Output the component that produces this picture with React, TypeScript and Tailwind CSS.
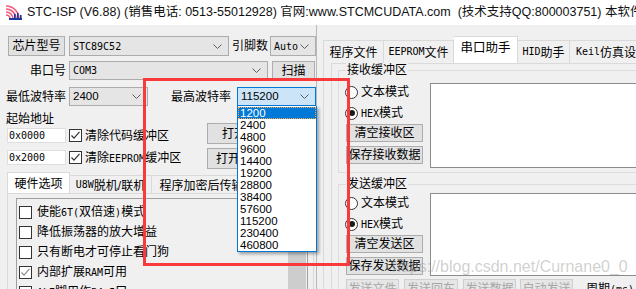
import React from "react";

const SANS = "font-['Liberation_Sans','Noto_Sans_CJK_SC',sans-serif]";

function M({ children }: { children: React.ReactNode }) {
  return <span className="font-['DejaVu_Sans_Mono','Liberation_Mono','Noto_Sans_CJK_SC',monospace] text-[10px]">{children}</span>;
}

function Chevron() {
  return (
    <svg width="9" height="5" viewBox="0 0 9 5" className="shrink-0">
      <polyline points="0.5,0.5 4.5,4.5 8.5,0.5" fill="none" stroke="#5f5f5f" strokeWidth="1" />
    </svg>
  );
}

function Combo({ className = "", active = false, children }: { className?: string; active?: boolean; children: React.ReactNode }) {
  return (
    <div
      className={`flex items-center justify-between border pl-[3px] pr-[6px] whitespace-nowrap ${
        active ? "border-[#0078d7] bg-[#cce4f7]" : "border-[#acacac] bg-[#e5e5e5]"
      } ${className}`}
    >
      <span className="flex items-center">{children}</span>
      <Chevron />
    </div>
  );
}

function Btn({ className = "", disabled = false, children }: { className?: string; disabled?: boolean; children: React.ReactNode }) {
  return (
    <div
      className={`flex items-center justify-center border whitespace-nowrap shrink-0 ${
        disabled ? "border-[#cfcfcf] bg-[#e6e6e6] text-[#a6a6a6]" : "border-[#adadad] bg-[#e1e1e1]"
      } ${className}`}
    >
      {children}
    </div>
  );
}

function Check({ checked = false, gray = false, className = "" }: { checked?: boolean; gray?: boolean; className?: string }) {
  return (
    <div className={`w-[13px] h-[13px] border border-[#333333] bg-white flex items-center justify-center shrink-0 ${className}`}>
      {checked && (
        <svg width="11" height="11" viewBox="0 0 11 11">
          <polyline points="1.5,5.5 4,8.2 9.5,1.8" fill="none" stroke={gray ? "#8a8a8a" : "#333333"} strokeWidth="1.2" />
        </svg>
      )}
    </div>
  );
}

function Radio({ checked = false }: { checked?: boolean }) {
  return (
    <div className="w-[13px] h-[13px] rounded-full border border-[#333333] bg-white flex items-center justify-center shrink-0">
      {checked && <div className="w-[6px] h-[6px] rounded-full bg-[#1a1a1a]" />}
    </div>
  );
}

function Logo() {
  return (
    <svg width="18" height="15" viewBox="0 0 18 15" className="shrink-0">
      <path d="M1 4 A10 10 0 0 1 11 14" fill="none" stroke="#ef5a7a" strokeWidth="1.6" />
      <path d="M1 1 A13 13 0 0 1 14 14" fill="none" stroke="#ef5a7a" strokeWidth="1.6" />
      <path d="M1 7 A7 7 0 0 1 8 14" fill="none" stroke="#ef5a7a" strokeWidth="1.6" />
      <path d="M1 10 A4 4 0 0 1 5 14" fill="none" stroke="#ef5a7a" strokeWidth="1.6" />
      <rect x="4" y="13" width="13" height="2" fill="#1c3a9e" />
      <rect x="9" y="9" width="1.6" height="5" fill="#1c3a9e" />
      <rect x="12" y="8" width="1.6" height="6" fill="#1c3a9e" />
      <rect x="15" y="10" width="1.6" height="4" fill="#1c3a9e" />
    </svg>
  );
}

function GroupBox({ title, className = "", children }: { title: string; className?: string; children: React.ReactNode }) {
  return (
    <div className={`relative border border-[#dcdcdc] ${className}`}>
      <span className="absolute -top-[8px] left-[7px] bg-[#f0f0f0] px-[1px] leading-[14px]">{title}</span>
      {children}
    </div>
  );
}

const BAUDS = ["1200", "2400", "4800", "9600", "14400", "19200", "28800", "38400", "57600", "115200", "230400", "460800"];

export default function App() {
  return (
    <div className={`relative w-[636px] h-[289px] overflow-hidden bg-[#f0f0f0] text-[12px] text-black ${SANS}`}>
      {/* Title bar */}
      <div className="h-[25px] bg-white flex items-center pl-[5px] whitespace-nowrap overflow-hidden">
        <Logo />
        <span className="ml-[4px] text-[12.5px] text-[#111]">
          STC-ISP (V6.88) (销售电话: 0513-55012928) 官网:www.STCMCUDATA.com&nbsp;&nbsp;(技术支持QQ:800003751) 本软件为宏晶科技官方软件
        </span>
      </div>

      <div className="flex">
        {/* Left panel */}
        <div className="w-[316px] shrink-0 flex flex-col">
          <div className="flex items-center h-[20px] mt-[11px] pl-[8px]">
            <Btn className="w-[57px] h-[20px]">芯片型号</Btn>
            <Combo className="ml-[4px] w-[160px] h-[20px]">
              <M>STC89C52</M>
            </Combo>
            <span className="ml-[3px] w-[36px] whitespace-nowrap">引脚数</span>
            <Combo className="ml-[2px] w-[46px] h-[20px]">
              <M>Auto</M>
            </Combo>
          </div>

          <div className="flex items-center h-[19px] mt-[5px]">
            <span className="w-[66px] text-right">串口号</span>
            <Combo className="ml-[3px] w-[199px] h-[19px]">
              <M>COM3</M>
            </Combo>
            <Btn className="ml-[4px] w-[43px] h-[19px]">扫描</Btn>
          </div>

          <div className="flex items-center h-[19px] mt-[7px]">
            <span className="w-[66px] text-right whitespace-nowrap">最低波特率</span>
            <Combo className="ml-[3px] w-[79px] h-[19px]">
              <span className="text-[11.5px]">2400</span>
            </Combo>
            <span className="ml-[23px] w-[60px] whitespace-nowrap">最高波特率</span>
            <Combo active className="ml-[6px] w-[79px] h-[19px]">
              <span className="text-[11.5px]">115200</span>
            </Combo>
          </div>

          <div className="flex mt-[5px]">
            <div className="w-[207px] pl-[6px]">
              <div className="h-[17px] leading-[17px]">起始地址</div>
              <div className="flex items-center h-[15px]">
                <div className="ml-[1px] w-[59px] h-[15px] bg-white border border-[#dedede] flex items-center pl-[1px]">
                  <M>0x0000</M>
                </div>
                <Check checked className="ml-[3px]" />
                <span className="ml-[3px] whitespace-nowrap">清除代码缓冲区</span>
              </div>
              <div className="flex items-center h-[15px] mt-[7px]">
                <div className="ml-[1px] w-[59px] h-[15px] bg-white border border-[#dedede] flex items-center pl-[1px]">
                  <M>0x2000</M>
                </div>
                <Check checked className="ml-[3px]" />
                <span className="ml-[3px] whitespace-nowrap">
                  清除<M>EEPROM</M>缓冲区
                </span>
              </div>
            </div>
            <div className="flex flex-col pt-[12px] gap-[4px]">
              <Btn className="w-[102px] h-[21px]">打开程序文件</Btn>
              <Btn className="w-[102px] h-[21px]">
                打开<M>EEPROM</M>文件
              </Btn>
            </div>
          </div>

          {/* bottom tabs */}
          <div className="ml-[7px] mt-[3px] flex items-end h-[21px]">
            <div className="w-[63px] h-[21px] bg-white border border-b-0 border-[#d9d9d9] flex justify-center pt-[2px] whitespace-nowrap">硬件选项</div>
            <div className="w-[82px] h-[18px] border-t border-r border-[#d9d9d9] flex justify-center pt-[1px] whitespace-nowrap">
              <M>U8W</M>脱机/联机
            </div>
            <div className="w-[100px] h-[18px] border-t border-r border-[#d9d9d9] flex justify-center pt-[1px] whitespace-nowrap">程序加密后传输</div>
            <div className="w-[60px] h-[18px] border-t border-r border-[#d9d9d9]" />
          </div>
          <div className="ml-[7px] w-[307px] h-[120px] border border-[#d9d9d9] pl-[8px] pt-[4px]">
            <div className="w-[292px] h-[120px] border-l border-t border-r border-[#a0a0a0] flex">
              <div className="flex-1 flex flex-col pt-[3px] pl-[2px]">
                {[
                  { t: <>使能<M>6T(</M>双倍速<M>)</M>模式</> },
                  { t: <>降低振荡器的放大增益</> },
                  { t: <>只有断电才可停止看门狗</> },
                  { t: <>内部扩展<M>RAM</M>可用</>, c: true },
                  { t: <><M>ALE</M>脚用作<M>P4.5</M>口</> },
                ].map((r, i) => (
                  <div key={i} className="h-[20px] flex items-center">
                    <Check checked={!!r.c} gray />
                    <span className="ml-[5px] whitespace-nowrap">{r.t}</span>
                  </div>
                ))}
              </div>
              <div className="w-[18px] bg-[#cdcdcd] mr-[1px]" />
            </div>
          </div>
        </div>

        {/* Right panel */}
        <div className="w-[400px] shrink-0 border-l border-[#b9b9b9] flex flex-col">
          <div className="ml-[6px] mt-[11px] flex items-end h-[27px]">
            <div className="w-[61px] h-[23px] border border-b-0 border-[#d9d9d9] flex justify-center pt-[3px] whitespace-nowrap">程序文件</div>
            <div className="w-[70px] h-[23px] border-t border-r border-[#d9d9d9] flex justify-center pt-[3px] whitespace-nowrap">
              <M>EEPROM</M>文件
            </div>
            <div className="w-[64px] h-[27px] bg-white border-t border-r border-[#d9d9d9] flex justify-center pt-[2px] whitespace-nowrap text-[12.5px]">串口助手</div>
            <div className="w-[52px] h-[23px] border-t border-r border-[#d9d9d9] flex justify-center pt-[3px] whitespace-nowrap">
              <M>HID</M>助手
            </div>
            <div className="w-[90px] h-[23px] border-t border-r border-[#d9d9d9] flex pl-[6px] pt-[3px] whitespace-nowrap">
              <M>Keil</M>仿真设置
            </div>
          </div>
          <div className="ml-[6px] border-l border-[#d9d9d9] h-[240px]">
            <div className="ml-[7px] border-l border-t border-[#dadada] h-[240px] pl-[6px] pt-[6px]">
              <GroupBox title="接收缓冲区" className="w-[340px]">
                <div className="flex items-start pt-[11px] pb-[4px]">
                  <div className="w-[91px] flex flex-col shrink-0">
                    <div className="h-[20px] flex items-center pl-[6px]">
                      <Radio />
                      <span className="ml-[3px]">文本模式</span>
                    </div>
                    <div className="h-[20px] mt-[1px] flex items-center pl-[6px]">
                      <Radio checked />
                      <span className="ml-[3px]">
                        <M>HEX</M>模式
                      </span>
                    </div>
                    <Btn className="ml-[7px] mt-[1px] w-[77px] h-[18px]">清空接收区</Btn>
                    <Btn className="ml-[7px] mt-[4px] w-[77px] h-[18px]">保存接收数据</Btn>
                  </div>
                  <div className="flex-1 mt-[1px] h-[85px] bg-white border border-[#8c8c8c]" />
                </div>
              </GroupBox>

              <GroupBox title="发送缓冲区" className="w-[340px] mt-[11px] h-[120px]">
                <div className="flex items-start pt-[8px]">
                  <div className="w-[91px] flex flex-col shrink-0">
                    <div className="h-[20px] flex items-center pl-[6px]">
                      <Radio />
                      <span className="ml-[3px]">文本模式</span>
                    </div>
                    <div className="h-[20px] mt-[1px] flex items-center pl-[6px]">
                      <Radio checked />
                      <span className="ml-[3px]">
                        <M>HEX</M>模式
                      </span>
                    </div>
                    <Btn className="ml-[7px] mt-[1px] w-[77px] h-[18px]">清空发送区</Btn>
                    <Btn className="ml-[7px] mt-[4px] w-[77px] h-[18px]">保存发送数据</Btn>
                  </div>
                  <div className="flex-1 h-[83px] bg-white border border-[#8c8c8c]" />
                </div>
                <div className="flex items-center mt-[3px] pl-[7px] h-[20px]">
                  <Btn disabled className="w-[53px] h-[20px]">发送文件</Btn>
                  <Btn disabled className="ml-[5px] w-[54px] h-[20px]">发送回车</Btn>
                  <Btn disabled className="ml-[5px] w-[53px] h-[20px]">发送数据</Btn>
                  <Btn disabled className="ml-[4px] w-[53px] h-[20px]">自动发送</Btn>
                  <span className="ml-[13px] whitespace-nowrap">
                    周期<M>(ms)</M>
                  </span>
                </div>
              </GroupBox>
            </div>
          </div>
        </div>
      </div>

      {/* Dropdown list overlay */}
      <div className="absolute left-[237px] top-[106px] w-[80px] border-l border-r border-b border-[#0078d7] bg-white pt-[1px] shadow-[2px_2px_3px_rgba(0,0,0,0.35)]">
        {BAUDS.map((b, i) => (
          <div
            key={b}
            className={`h-[12px] leading-[12px] pl-[2px] text-[11.5px] ${
              i === 0 ? "bg-[#0078d7] text-white outline outline-1 outline-dotted outline-[#f2a94a] -outline-offset-1" : ""
            }`}
          >
            {b}
          </div>
        ))}
      </div>

      {/* Red highlight rectangle */}
      <div className="absolute left-[143px] top-[78px] w-[207px] h-[188px] border-[3px] border-[#f83a3a] pointer-events-none" />

      {/* Watermark */}
      <div className="absolute left-[392px] top-[258px] text-[16px] leading-[18px] font-['Liberation_Sans',sans-serif] text-[rgba(150,150,150,0.45)] whitespace-nowrap pointer-events-none">
        https://blog.csdn.net/Curnane0_0
      </div>
    </div>
  );
}
